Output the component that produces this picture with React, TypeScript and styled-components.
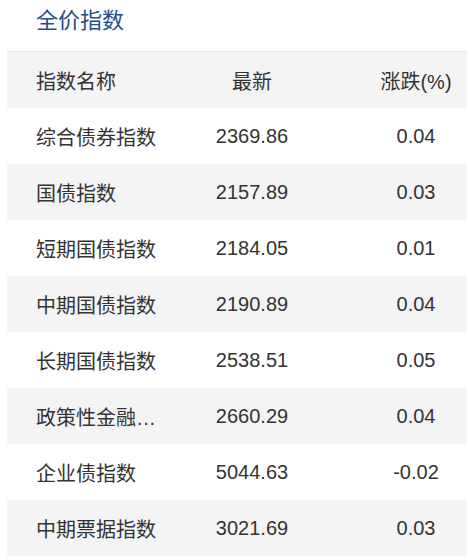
import React from 'react';
import styled, { createGlobalStyle } from 'styled-components';

interface IndexRow {
  name: string;
  latest: string;
  change: string;
}

const rows: IndexRow[] = [
  { name: '综合债券指数', latest: '2369.86', change: '0.04' },
  { name: '国债指数', latest: '2157.89', change: '0.03' },
  { name: '短期国债指数', latest: '2184.05', change: '0.01' },
  { name: '中期国债指数', latest: '2190.89', change: '0.04' },
  { name: '长期国债指数', latest: '2538.51', change: '0.05' },
  { name: '政策性金融债指数', latest: '2660.29', change: '0.04' },
  { name: '企业债指数', latest: '5044.63', change: '-0.02' },
  { name: '中期票据指数', latest: '3021.69', change: '0.03' },
];

const GlobalStyle = createGlobalStyle`
  html, body {
    margin: 0;
    padding: 0;
    background: #ffffff;
  }
  body {
    font-family: "Liberation Sans", Arial, "Noto Sans CJK SC", sans-serif;
    color: #333333;
  }
`;

const App: React.FC = () => {
  return (
    <>
      <GlobalStyle />
      <Panel>
        <Title>全价指数</Title>
        <Table>
          <HeaderRow>
            <NameCell title="指数名称">指数名称</NameCell>
            <ValueCell>最新</ValueCell>
            <ChangeCell>涨跌(%)</ChangeCell>
          </HeaderRow>
          {rows.map((row, i) => (
            <Row key={row.name} $striped={i % 2 === 1}>
              <NameCell title={row.name}>{row.name}</NameCell>
              <ValueCell>{row.latest}</ValueCell>
              <ChangeCell>{row.change}</ChangeCell>
            </Row>
          ))}
        </Table>
      </Panel>
    </>
  );
};

const Panel = styled.div`
  width: 467px;
  padding-left: 7px;
  box-sizing: border-box;
`;

const Title = styled.div`
  height: 51px;
  padding: 5px 0 0 29px;
  box-sizing: border-box;
  font-size: 22px;
  line-height: 32px;
  color: #234e86;
`;

const Table = styled.div`
  border-top: 1px solid #e6e6e6;
`;

const Row = styled.div<{ $striped?: boolean }>`
  display: grid;
  grid-template-columns: 183px 124px 1fr;
  align-items: center;
  height: 56px;
  font-size: 20px;
  background: ${({ $striped }) => ($striped ? '#f4f4f4' : '#ffffff')};
`;

const HeaderRow = styled(Row)`
  background: #f4f4f4;
`;

const NameCell = styled.div`
  padding: 0 29px;
  white-space: nowrap;
  overflow: hidden;
  text-overflow: ellipsis;
`;

const ValueCell = styled.div`
  text-align: center;
  white-space: nowrap;
`;

const ChangeCell = styled(ValueCell)`
  padding-left: 51px;
`;

export default App;
